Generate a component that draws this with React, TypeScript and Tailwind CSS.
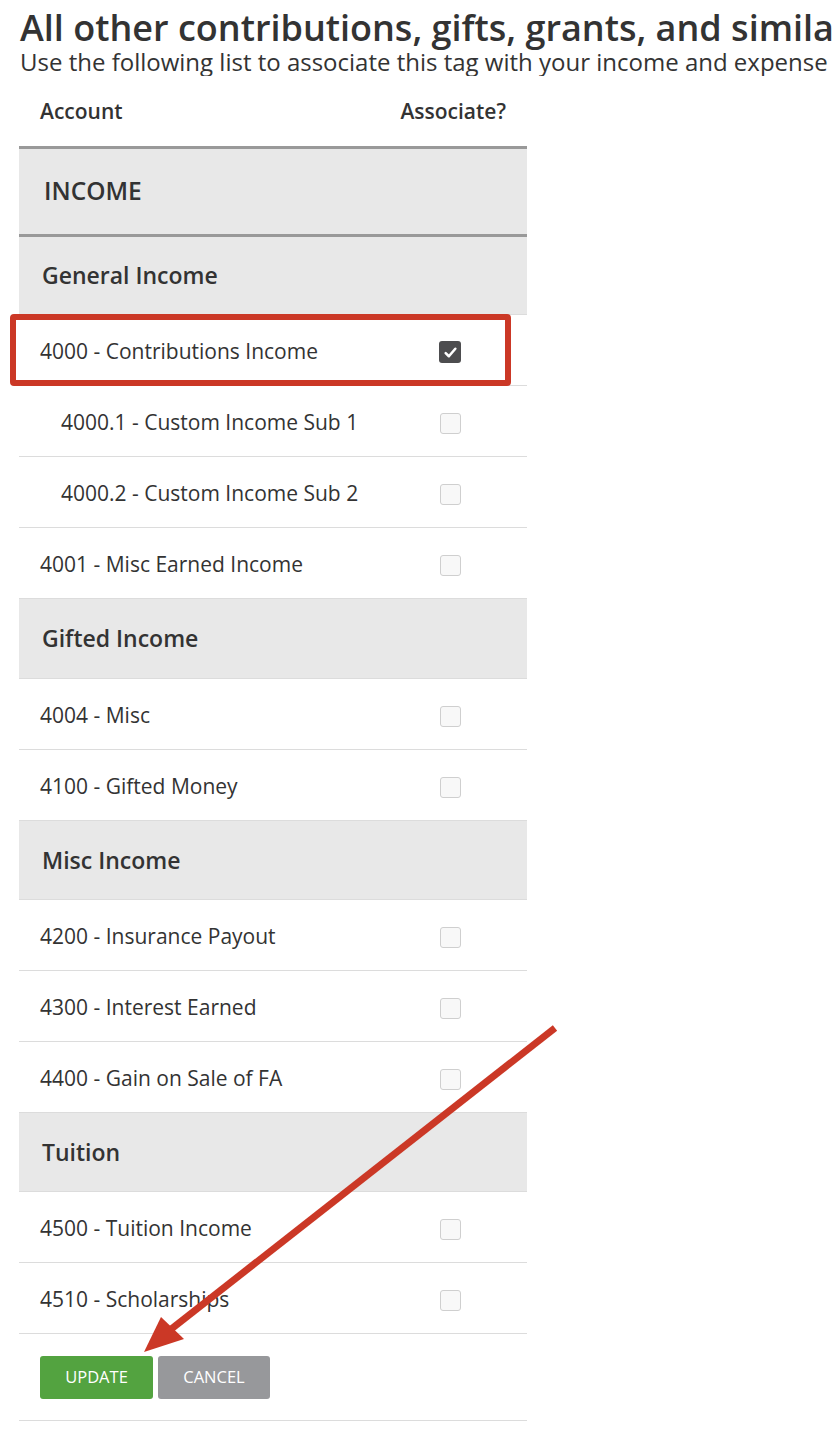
import React from "react";

type Row =
  | { kind: "group"; label: string; h: string }
  | { kind: "item"; label: string; sub?: boolean; checked?: boolean };

const rows: Row[] = [
  { kind: "group", label: "General Income", h: "h-[78px]" },
  { kind: "item", label: "4000 - Contributions Income", checked: true },
  { kind: "item", label: "4000.1 - Custom Income Sub 1", sub: true },
  { kind: "item", label: "4000.2 - Custom Income Sub 2", sub: true },
  { kind: "item", label: "4001 - Misc Earned Income" },
  { kind: "group", label: "Gifted Income", h: "h-[80px]" },
  { kind: "item", label: "4004 - Misc" },
  { kind: "item", label: "4100 - Gifted Money" },
  { kind: "group", label: "Misc Income", h: "h-[79px]" },
  { kind: "item", label: "4200 - Insurance Payout" },
  { kind: "item", label: "4300 - Interest Earned" },
  { kind: "item", label: "4400 - Gain on Sale of FA" },
  { kind: "group", label: "Tuition", h: "h-[79px]" },
  { kind: "item", label: "4500 - Tuition Income" },
  { kind: "item", label: "4510 - Scholarships" },
];

function Checkbox({ checked }: { checked?: boolean }) {
  if (checked) {
    return (
      <div className="w-[22px] h-[22px] rounded-[3px] bg-[#4d4d4f] flex items-center justify-center">
        <svg width="15" height="15" viewBox="0 0 14 14">
          <path d="M2.5 7.5 L5.5 10.5 L11.5 3.5" fill="none" stroke="white" strokeWidth="2.4" strokeLinecap="round" strokeLinejoin="round" />
        </svg>
      </div>
    );
  }
  return <div className="w-[21px] h-[21px] rounded-[3px] border border-[#cfcfcf] bg-[#f8f8f8]" />;
}

export default function App() {
  return (
    <div
      className="relative w-[834px] h-[1430px] overflow-hidden bg-white text-[#333]"
      style={{ fontFamily: '"Open Sans", "Noto Sans", sans-serif' }}
    >
      <div className="pl-[20px] pt-[8px] w-[834px] overflow-hidden">
        <h1 className="text-[36px] font-semibold leading-[40px] whitespace-nowrap text-[#333]">
          All other contributions, gifts, grants, and simila
        </h1>
        <p className="text-[24px] leading-[28px] whitespace-nowrap text-[#333]">
          Use the following list to associate this tag with your income and expense
        </p>
      </div>

      <div className="ml-[19px] w-[508px]">
        <div className="flex items-center justify-between h-[70px] pt-[1px] pl-[21px] pr-[21px] text-[21px] font-semibold">
          <span>Account</span>
          <span>Associate?</span>
        </div>
        <div className="border-t-[3px] border-[#999]" />
        <div className="bg-[#e8e8e8] h-[88px] flex items-center pl-[25px] text-[24.5px] font-semibold border-b-[3px] border-[#999]">
          INCOME
        </div>
        {rows.map((r, i) =>
          r.kind === "group" ? (
            <div
              key={i}
              className={`bg-[#e8e8e8] ${r.h} flex items-center pl-[23px] text-[23px] font-semibold border-b border-[#dcdcdc]`}
            >
              {r.label}
            </div>
          ) : (
            <div
              key={i}
              className={`h-[71px] flex items-center justify-between border-b border-[#dcdcdc] pt-[4px] pr-[66px] text-[21px] ${
                r.sub ? "pl-[42px]" : "pl-[21px]"
              }`}
            >
              <span>{r.label}</span>
              <Checkbox checked={r.checked} />
            </div>
          )
        )}
        <div className="h-[87px] flex items-center gap-[5px] pl-[21px] border-b border-[#dcdcdc]">
          <button className="w-[113px] h-[43px] rounded-[3px] bg-[#53a340] text-white text-[16.5px] uppercase">
            Update
          </button>
          <button className="w-[112px] h-[43px] rounded-[3px] bg-[#97989b] text-white text-[16.5px] uppercase">
            Cancel
          </button>
        </div>
      </div>

      {/* red highlight box */}
      <div className="absolute left-[10px] top-[314px] w-[501px] h-[72px] border-[6px] border-[#cb3826] rounded-[4px]" />

      {/* arrow */}
      <svg className="absolute left-0 top-0 pointer-events-none" width="834" height="1430">
        <line x1="555" y1="1028" x2="170" y2="1330" stroke="#cb3826" strokeWidth="7" />
        <polygon points="144,1352 161,1317 184,1339" fill="#cb3826" />
      </svg>
    </div>
  );
}
